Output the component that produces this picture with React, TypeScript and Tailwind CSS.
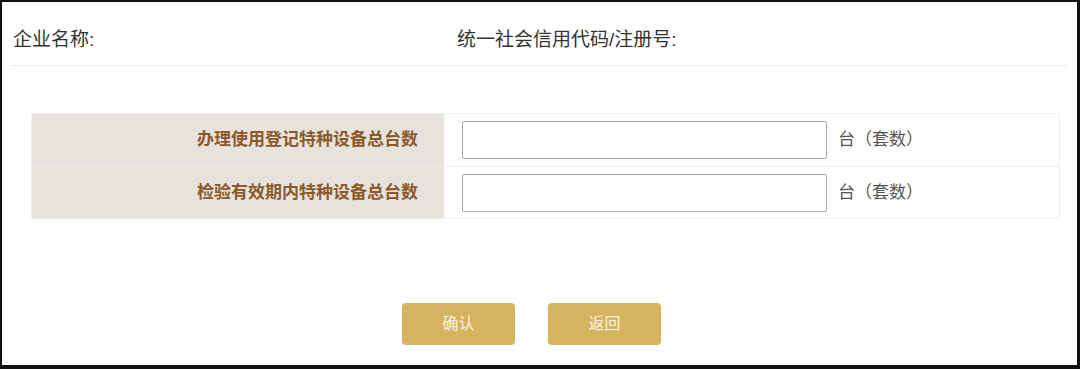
export default function App() {
    const rows = ["办理使用登记特种设备总台数", "检验有效期内特种设备总台数"];

    return (
        <div
            className="w-[1080px] h-[369px] bg-white border-t-2 border-l-2 border-r-[3px] border-b-4 border-[#111] overflow-hidden"
            style={{fontFamily: '"Liberation Sans", "Noto Sans CJK SC", sans-serif'}}>
            <div className="mx-[9px] h-[64px] flex items-end pb-[11px] pl-[2px] border-b border-[#ececec] text-[19px] text-[#333]">
                <div className="w-[444px]">企业名称:</div>
                <div>统一社会信用代码/注册号:</div>
            </div>

            <div className="ml-[29px] mt-[47px] w-[1029px] border border-[#f0f0f0]">
                {rows.map((label, i) => (
                    <div key={label}
                         className={`flex h-[52px] ${i > 0 ? "border-t border-[#ececec]" : ""}`}>
                        <div className="w-[412px] bg-[#e8e2dc] flex items-center justify-end pr-[26px] text-[17px] font-bold text-[#8a5a2a]">
                            {label}
                        </div>
                        <div className="flex-1 flex items-center pl-[18px]">
                            <input
                                className="w-[365px] h-[38px] border border-[#a9a9a9] rounded-[2px] outline-none px-2"/>
                            <span className="ml-[11px] text-[17px] text-[#555]">台（套数）</span>
                        </div>
                    </div>
                ))}
            </div>

            <div className="flex justify-center gap-[33px] mt-[84px] pr-[16px]">
                <button className="w-[113px] h-[42px] rounded-[4px] bg-[#d6b45f] text-[#fbf3e0] text-[16px]">确认</button>
                <button className="w-[113px] h-[42px] rounded-[4px] bg-[#d6b45f] text-[#fbf3e0] text-[16px]">返回</button>
            </div>
        </div>
    );
}
